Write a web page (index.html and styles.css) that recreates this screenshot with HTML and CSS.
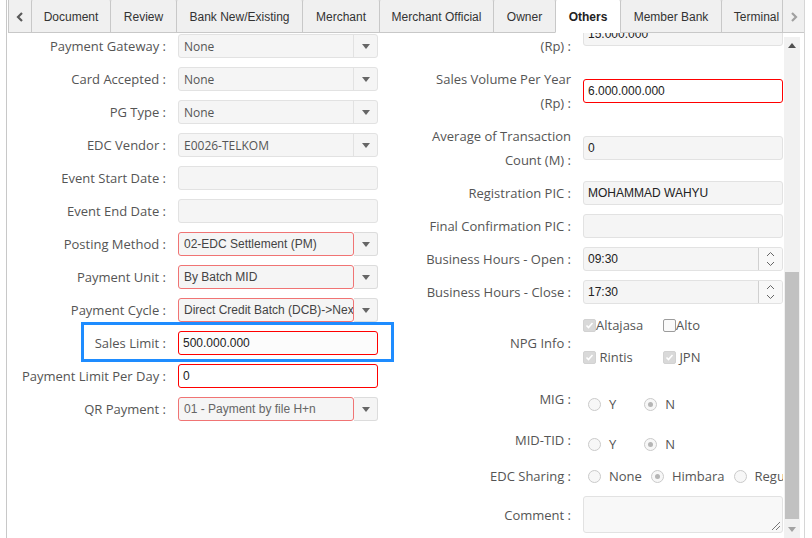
FILE: index.html
```html
<!DOCTYPE html>
<html>
<head>
<meta charset="utf-8">
<link rel="stylesheet" href="styles.css">
</head>
<body>
<div class="frame">
  <div class="tabs">
    <div class="tab-nav prev"><svg width="8" height="10" viewBox="0 0 8 10"><polyline points="6,1 2,5 6,9" fill="none" stroke="#5a5a5a" stroke-width="2.2"/></svg></div>
    <div class="tab-scroll">
      <div class="tab t-doc">Document</div>
      <div class="tab t-rev">Review</div>
      <div class="tab t-bank">Bank New/Existing</div>
      <div class="tab t-mer">Merchant</div>
      <div class="tab t-mof">Merchant Official</div>
      <div class="tab t-own">Owner</div>
      <div class="tab t-oth active">Others</div>
      <div class="tab t-mb">Member Bank</div>
      <div class="tab t-term">Terminal</div>
    </div>
    <div class="tab-nav next"><svg width="8" height="10" viewBox="0 0 8 10"><polyline points="2,1 6,5 2,9" fill="none" stroke="#a0a0a0" stroke-width="2.2"/></svg></div>
  </div>
  <div class="panel">
    <div class="content">
      <div class="grid">
        <div class="col col-left">
          <div class="row"><div class="lbl">Payment Gateway :</div><div class="field sel2"><span class="val">None</span><span class="btn"><i class="caret"></i></span></div></div>
          <div class="row"><div class="lbl">Card Accepted :</div><div class="field sel2"><span class="val">None</span><span class="btn"><i class="caret"></i></span></div></div>
          <div class="row"><div class="lbl">PG Type :</div><div class="field sel2"><span class="val">None</span><span class="btn"><i class="caret"></i></span></div></div>
          <div class="row"><div class="lbl">EDC Vendor :</div><div class="field sel2"><span class="val">E0026-TELKOM</span><span class="btn"><i class="caret"></i></span></div></div>
          <div class="row"><div class="lbl">Event Start Date :</div><div class="field inp"></div></div>
          <div class="row"><div class="lbl">Event End Date :</div><div class="field inp"></div></div>
          <div class="row"><div class="lbl">Posting Method :</div><div class="field selr"><span class="val">02-EDC Settlement (PM)</span><span class="btn"><i class="caret"></i></span></div></div>
          <div class="row"><div class="lbl">Payment Unit :</div><div class="field selr"><span class="val">By Batch MID</span><span class="btn"><i class="caret"></i></span></div></div>
          <div class="row"><div class="lbl">Payment Cycle :</div><div class="field selr"><span class="val">Direct Credit Batch (DCB)-&gt;Next Day</span><span class="btn"><i class="caret"></i></span></div></div>
          <div class="row"><div class="lbl">Sales Limit :</div><div class="field inp req soft">500.000.000</div></div>
          <div class="row"><div class="lbl">Payment Limit Per Day :</div><div class="field inp req">0</div></div>
          <div class="row"><div class="lbl">QR Payment :</div><div class="field selr"><span class="val muted">01 - Payment by file H+n</span><span class="btn"><i class="caret"></i></span></div></div>
        </div>
        <div class="col col-right">
          <div class="row"><div class="lbl">Sales Volume Per Month<br>(Rp) :</div><div class="field inp">15.000.000</div></div>
          <div class="row"><div class="lbl">Sales Volume Per Year<br>(Rp) :</div><div class="field inp req">6.000.000.000</div></div>
          <div class="row"><div class="lbl">Average of Transaction<br>Count (M) :</div><div class="field inp">0</div></div>
          <div class="row"><div class="lbl">Registration PIC :</div><div class="field inp">MOHAMMAD WAHYU</div></div>
          <div class="row"><div class="lbl">Final Confirmation PIC :</div><div class="field inp"></div></div>
          <div class="row"><div class="lbl">Business Hours - Open :</div><div class="field inp time"><span class="tval">09:30</span><span class="spin"><svg width="9" height="16" viewBox="0 0 9 16"><polyline points="1,5 4.5,1.5 8,5" fill="none" stroke="#666" stroke-width="1"/><polyline points="1,11 4.5,14.5 8,11" fill="none" stroke="#666" stroke-width="1"/></svg></span></div></div>
          <div class="row"><div class="lbl">Business Hours - Close :</div><div class="field inp time"><span class="tval">17:30</span><span class="spin"><svg width="9" height="16" viewBox="0 0 9 16"><polyline points="1,5 4.5,1.5 8,5" fill="none" stroke="#666" stroke-width="1"/><polyline points="1,11 4.5,14.5 8,11" fill="none" stroke="#666" stroke-width="1"/></svg></span></div></div>
          <div class="row npg"><div class="lbl">NPG Info :</div>
            <div class="field checks">
              <span class="ck"><i class="cb on"><svg width="11" height="11" viewBox="0 0 11 11"><polyline points="2.5,5.5 4.5,7.5 8.5,3" fill="none" stroke="#fff" stroke-width="1.6"/></svg></i>Altajasa</span>
              <span class="ck"><i class="cb off"></i>Alto</span>
              <span class="ck"><i class="cb on"><svg width="11" height="11" viewBox="0 0 11 11"><polyline points="2.5,5.5 4.5,7.5 8.5,3" fill="none" stroke="#fff" stroke-width="1.6"/></svg></i>&nbsp;Rintis</span>
              <span class="ck"><i class="cb on"><svg width="11" height="11" viewBox="0 0 11 11"><polyline points="2.5,5.5 4.5,7.5 8.5,3" fill="none" stroke="#fff" stroke-width="1.6"/></svg></i>&nbsp;JPN</span>
            </div>
          </div>
          <div class="row top mig"><div class="lbl">MIG :</div>
            <div class="field radios pad5"><span class="rd wide"><i class="rb"></i>Y</span><span class="rd"><i class="rb on"></i>N</span></div>
          </div>
          <div class="row top midtid"><div class="lbl">MID-TID :</div>
            <div class="field radios pad4"><span class="rd wide"><i class="rb"></i>Y</span><span class="rd"><i class="rb on"></i>N</span></div>
          </div>
          <div class="row edc"><div class="lbl">EDC Sharing :</div>
            <div class="field radios"><span class="rd"><i class="rb"></i>None</span><span class="rd"><i class="rb on"></i>Himbara</span><span class="rd"><i class="rb"></i>Regular</span></div>
          </div>
          <div class="row"><div class="lbl">Comment :</div>
            <div class="field ta"><svg class="grip" width="10" height="10" viewBox="0 0 10 10"><line x1="1" y1="9" x2="9" y2="1" stroke="#777" stroke-width="1"/><line x1="5" y1="9" x2="9" y2="5" stroke="#777" stroke-width="1"/></svg></div>
          </div>
        </div>
      </div>
    </div>
    <div class="scrollbar">
      <div class="sb-btn"><svg width="8" height="5" viewBox="0 0 8 5"><polygon points="0,5 4,0 8,5" fill="#505050"/></svg></div>
      <div class="sb-track"><div class="sb-thumb"></div></div>
      <div class="sb-btn"><svg width="8" height="5" viewBox="0 0 8 5"><polygon points="0,0 8,0 4,5" fill="#a3a3a3"/></svg></div>
    </div>
  </div>
</div>
<div class="highlight"></div>
</body>
</html>
```

FILE: styles.css
```css
html, body {
  margin: 0;
  padding: 0;
}
body {
  width: 812px;
  height: 538px;
  overflow: hidden;
  background: #fff;
  font-family: "Open Sans", "Liberation Sans", sans-serif;
  position: relative;
}
.frame {
  margin-left: 6px;
  width: 799px;
  height: 538px;
  box-sizing: border-box;
  border-left: 1px solid #c8c8c8;
  border-right: 1px solid #d6d6d6;
  padding-left: 1px;
  display: flex;
  flex-direction: column;
}

/* tabs */
.tabs {
  display: flex;
  height: 33px;
  flex: none;
}
.tab-nav {
  flex: none;
  height: 33px;
  box-sizing: border-box;
  border-left: 1px solid #c8c8c8;
  border-bottom: 1px solid #c8c8c8;
  background: #f0f0f0;
  display: flex;
  align-items: center;
  justify-content: center;
  padding-top: 1px;
}
.tab-nav.prev { width: 23px; }
.tab-nav.next { width: 22px; }
.tab-scroll {
  flex: 1;
  min-width: 0;
  display: flex;
  overflow: hidden;
  align-items: flex-start;
  height: 33px;
}
.tab {
  flex: none;
  height: 35px;
  margin-top: -2px;
  box-sizing: border-box;
  padding: 2px 0 0;
  border: 1px solid #c8c8c8;
  border-right: none;
  border-radius: 4px 4px 0 0;
  background: #f0f0f0;
  font: 12px "Liberation Sans", Arial, sans-serif;
  color: #333;
  display: flex;
  align-items: center;
  justify-content: center;
  white-space: nowrap;
}
.t-doc { width: 79px; }
.t-rev { width: 66px; }
.t-bank { width: 126px; }
.t-mer { width: 77px; }
.t-mof { width: 114px; }
.t-own { width: 62px; }
.t-oth { width: 65px; }
.t-mb { width: 101px; }
.t-term { width: 72px; padding-right: 2px; }
.tab.active {
  background: #fff;
  border-bottom-color: #fff;
  font-weight: bold;
  color: #222;
}

/* panel */
.panel {
  flex: 1;
  min-height: 0;
  display: flex;
}
.content {
  width: 776px;
  flex: none;
  overflow: hidden;
}
.grid {
  display: grid;
  grid-template-columns: 405px 371px;
}
.col-left { padding-top: 1px; }
.col-right { margin-top: -23px; }

.row {
  display: flex;
  align-items: center;
  margin-bottom: 9px;
}
.row.top { align-items: flex-start; }
.lbl {
  flex: none;
  width: 170px;
  box-sizing: border-box;
  padding-right: 12px;
  text-align: right;
  font-size: 13px;
  line-height: 24px;
  color: #555;
  white-space: nowrap;
}
.field {
  flex: none;
  width: 200px;
  box-sizing: border-box;
}

/* inputs */
.inp {
  height: 24px;
  border: 1px solid #e2e2e2;
  border-radius: 3px;
  background: #f5f5f5;
  padding: 0 4px;
  font: 12px "Liberation Sans", Arial, sans-serif;
  color: #222;
  display: flex;
  align-items: center;
  overflow: hidden;
  white-space: nowrap;
}
.inp.req {
  border-color: #f00;
  background: #fff;
}
.inp.soft { background: #fcfcfc; }
.inp.time { padding-right: 0; }
.tval { flex: 1; }
.spin {
  width: 23px;
  height: 100%;
  border-left: 1px solid #d0d0d0;
  display: flex;
  align-items: center;
  justify-content: center;
  background: #f8f8f8;
}

.sel2 {
  height: 24px;
  display: flex;
  border: 1px solid #e2e2e2;
  border-radius: 3px;
  background: #f5f5f5;
}
.sel2 .val {
  flex: 1;
  padding-left: 5px;
  font-size: 12px;
  line-height: 23px;
  color: #555;
}
.btn {
  width: 24px;
  flex: none;
  display: flex;
  align-items: center;
  justify-content: center;
  box-sizing: border-box;
}
.sel2 .btn { border-left: 1px solid #e2e2e2; }
.caret {
  width: 0;
  height: 0;
  border-left: 4px solid transparent;
  border-right: 4px solid transparent;
  border-top: 5px solid #666;
}
.selr {
  height: 24px;
  display: flex;
}
.selr .val {
  width: 176px;
  flex: none;
  box-sizing: border-box;
  border: 1px solid #f07474;
  border-radius: 3px;
  background: #f5f5f5;
  padding-left: 5px;
  padding-right: 4px;
  font: 12px "Liberation Sans", Arial, sans-serif;
  line-height: 22px;
  color: #444;
  white-space: nowrap;
  overflow: hidden;
}
.selr .val.muted { color: #666; }
.selr .btn {
  border: 1px solid #dcdcdc;
  border-left: none;
  border-radius: 0 3px 3px 0;
  background: #f5f5f5;
}

/* checkboxes */
.checks {
  display: grid;
  grid-template-columns: 80px auto;
  row-gap: 8px;
  font-size: 13px;
  color: #555;
}
.ck {
  display: flex;
  align-items: center;
  height: 24px;
  white-space: nowrap;
}
.cb {
  width: 13px;
  height: 13px;
  box-sizing: border-box;
  border-radius: 2px;
  flex: none;
  display: flex;
  align-items: center;
  justify-content: center;
  margin-top: 1px;
}
.cb.on { background: #d9d9d9; border: 1px solid #d2d2d2; }
.cb.off { background: #fafafa; border: 1px solid #9c9c9c; }
.npg .lbl { padding-top: 4px; }

/* radios */
.radios {
  display: flex;
  align-items: center;
  height: 24px;
  padding-left: 5px;
  overflow: hidden;
  white-space: nowrap;
  font-size: 13px;
  color: #555;
}
.radios.pad5 { height: 29px; padding-top: 5px; }
.radios.pad4 { height: 28px; padding-top: 4px; }
.rd {
  display: flex;
  align-items: center;
  margin-right: 9px;
  flex: none;
}
.rd.wide { margin-right: 28px; }
.rb {
  width: 13px;
  height: 13px;
  box-sizing: border-box;
  border-radius: 50%;
  border: 1px solid #cacaca;
  background: #f7f7f7;
  margin-right: 8px;
  display: flex;
  align-items: center;
  justify-content: center;
  flex: none;
}
.rb.on::after {
  content: "";
  width: 5px;
  height: 5px;
  border-radius: 50%;
  background: #b5b5b5;
}
.mig { margin-top: 18px; margin-bottom: 12px; }
.midtid { margin-bottom: 8px; }
.edc { margin-bottom: 8px; }

.ta {
  height: 37px;
  border: 1px solid #e2e2e2;
  border-radius: 3px;
  background: #f8f8f8;
  position: relative;
}
.grip {
  position: absolute;
  right: 1px;
  bottom: 1px;
}

/* scrollbar */
.scrollbar {
  width: 16px;
  flex: none;
  margin-top: 4px;
  background: #f1f1f1;
  display: flex;
  flex-direction: column;
}
.sb-btn {
  height: 17px;
  flex: none;
  display: flex;
  align-items: center;
  justify-content: center;
}
.sb-track {
  flex: 1;
  padding: 0 1px 0 1px;
}
.sb-thumb {
  margin-top: 218px;
  height: 247px;
  background: #c1c1c1;
}

.highlight {
  position: absolute;
  left: 81px;
  top: 322px;
  width: 313px;
  height: 40px;
  box-sizing: border-box;
  border: 3px solid #1e8cff;
}
```
